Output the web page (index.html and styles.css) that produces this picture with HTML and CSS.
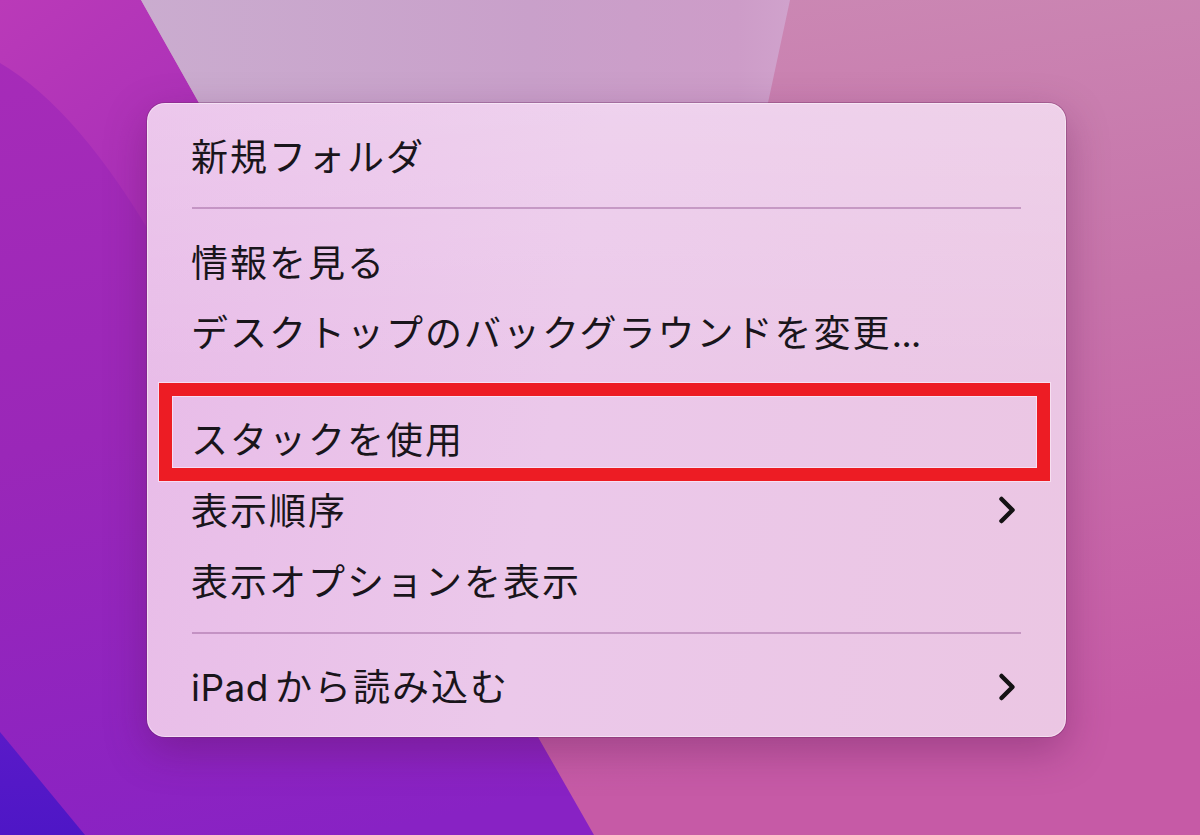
FILE: index.html
```html
<!DOCTYPE html>
<html lang="ja">
<head>
<meta charset="utf-8">
<title>Desktop context menu</title>
<link rel="stylesheet" href="styles.css">
</head>
<body>
<div class="desktop">
  <svg class="wallpaper" width="1200" height="835" viewBox="0 0 1200 835" aria-hidden="true">
    <defs>
      <linearGradient id="gPurple" x1="0" y1="0" x2="0.3" y2="1">
        <stop offset="0" stop-color="#a82cb8"/>
        <stop offset="0.5" stop-color="#9a27b8"/>
        <stop offset="1" stop-color="#8822c4"/>
      </linearGradient>
      <linearGradient id="gMagenta" x1="0" y1="0" x2="0.6" y2="1">
        <stop offset="0" stop-color="#ba3ab8"/>
        <stop offset="1" stop-color="#a82eb8"/>
      </linearGradient>
      <linearGradient id="gPink" x1="0" y1="0" x2="0.2" y2="1">
        <stop offset="0" stop-color="#cc8db6"/>
        <stop offset="0.5" stop-color="#c773aa"/>
        <stop offset="1" stop-color="#c65aa6"/>
      </linearGradient>
      <linearGradient id="gLight" x1="0" y1="0" x2="1" y2="0">
        <stop offset="0" stop-color="#caaccf"/>
        <stop offset="0.6" stop-color="#c9a0ca"/>
        <stop offset="0.92" stop-color="#cd9cc8"/>
        <stop offset="1" stop-color="#d0a2cc"/>
      </linearGradient>
      <linearGradient id="gViolet" x1="0" y1="0" x2="0" y2="1">
        <stop offset="0" stop-color="#5a1ac8"/>
        <stop offset="1" stop-color="#4e16c6"/>
      </linearGradient>
    </defs>
    <rect x="0" y="0" width="1200" height="835" fill="url(#gPurple)"/>
    <path d="M0,0 L141,0 L199,103 L160,250 Q80,110 0,63 Z" fill="url(#gMagenta)"/>
    <path d="M0,732 L85,835 L0,835 Z" fill="url(#gViolet)"/>
    <path d="M141,0 L1200,0 L1200,835 L594,835 L538,737 L199,103 Z" fill="url(#gPink)"/>
    <path d="M141,0 L790,0 L700,420 L330,420 L199,103 Z" fill="url(#gLight)"/>
  </svg>

  <div class="menu">
    <div class="item"><span class="label">新規フォルダ</span></div>
    <div class="sep"></div>
    <div class="item"><span class="label">情報を見る</span></div>
    <div class="item"><span class="label">デスクトップのバックグラウンドを変更<span class="dots">...</span></span></div>
    <div class="sep"></div>
    <div class="item"><span class="label">スタックを使用</span></div>
    <div class="item">
      <span class="label">表示順序</span>
      <svg class="chevron" width="20" height="30" viewBox="0 0 20 30" aria-hidden="true"><path d="M4.5,4 L15.5,15 L4.5,26"/></svg>
    </div>
    <div class="item"><span class="label">表示オプションを表示</span></div>
    <div class="sep"></div>
    <div class="item">
      <span class="label"><span class="latin">iPad</span>から読み込む</span>
      <svg class="chevron" width="20" height="30" viewBox="0 0 20 30" aria-hidden="true"><path d="M4.5,4 L15.5,15 L4.5,26"/></svg>
    </div>
    <div class="highlight"></div>
  </div>
</div>
</body>
</html>
```

FILE: styles.css
```css
html, body {
  margin: 0;
  padding: 0;
}

body {
  width: 1200px;
  height: 835px;
  overflow: hidden;
  font-family: "Inter", "Noto Sans CJK JP", sans-serif;
}

.desktop {
  position: relative;
  width: 1200px;
  height: 835px;
  box-sizing: border-box;
  padding: 103px 0 0 147px;
}

.wallpaper {
  position: absolute;
  left: 0;
  top: 0;
  z-index: 0;
}

.menu {
  position: relative;
  z-index: 1;
  width: 919px;
  height: 634px;
  box-sizing: border-box;
  padding: 17px 45px 15px 45px;
  border-radius: 18px;
  background:
    linear-gradient(180deg, rgba(255, 255, 255, 0.18) 0%, rgba(255, 255, 255, 0) 45%),
    linear-gradient(100deg, #e8bbe8 0%, #ebc8ea 45%, #ebc6e3 100%);
  box-shadow:
    inset 0 0 0 1px rgba(255, 255, 255, 0.45),
    0 0 0 1px rgba(110, 40, 100, 0.35),
    0 14px 40px rgba(90, 20, 80, 0.35);
  display: flex;
  flex-direction: column;
}

.item {
  height: 71px;
  display: flex;
  align-items: center;
  justify-content: space-between;
  color: #19151b;
  font-size: 37px;
  line-height: 1;
}

.label {
  white-space: nowrap;
  font-family: "Noto Sans CJK JP", sans-serif;
  letter-spacing: 2px;
  margin-left: -1px;
}

.latin {
  font-family: "Inter", sans-serif;
  letter-spacing: 0.5px;
  margin-right: 6px;
}

.dots {
  font-family: "Inter", sans-serif;
  letter-spacing: -1px;
  margin-left: 0;
}

.chevron {
  margin-right: 4px;
}

.chevron path {
  fill: none;
  stroke: #141214;
  stroke-width: 4.5;
  stroke-linecap: round;
  stroke-linejoin: round;
}

.sep {
  height: 2px;
  margin: 16px 0 17px 0;
  background: rgba(150, 90, 150, 0.45);
}

.highlight {
  position: absolute;
  left: 12px;
  top: 280px;
  width: 891px;
  height: 98px;
  box-sizing: border-box;
  border: 13px solid #ed1c24;
  box-shadow:
    0 0 0 1px rgba(255, 240, 250, 0.6),
    inset 0 0 0 1px rgba(255, 240, 250, 0.6);
}
```
